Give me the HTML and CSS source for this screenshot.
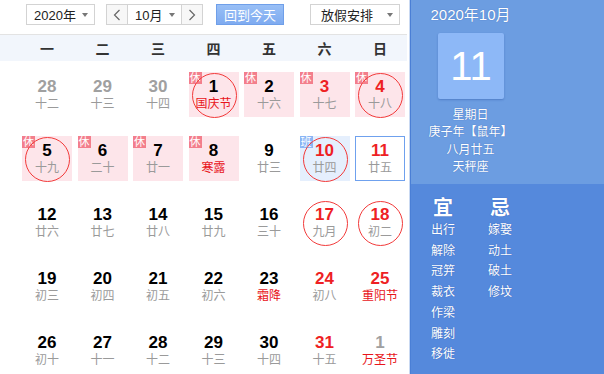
FILE: index.html
```html
<!DOCTYPE html>
<html lang="zh-CN">
<head>
    <meta charset="UTF-8">
    <title>万年历</title>
    <link rel="stylesheet" href="styles.css">
</head>
<body>
    <div class="calendar">
        <div class="main">
            <!-- 工具栏 -->
            <div class="toolbar">
                <div class="select year-select"><span>2020年</span><i class="caret"></i></div>
                <div class="month-group">
                    <span class="step"><svg width="8" height="12" viewBox="0 0 8 12"><path d="M6.5 1 L1.5 6 L6.5 11" fill="none" stroke="#666" stroke-width="1.2"/></svg></span>
                    <div class="select month-select"><span>10月</span><i class="caret"></i></div>
                    <span class="step"><svg width="8" height="12" viewBox="0 0 8 12"><path d="M1.5 1 L6.5 6 L1.5 11" fill="none" stroke="#666" stroke-width="1.2"/></svg></span>
                </div>
                <button class="today-btn">回到今天</button>
                <div class="select holiday-select"><span>放假安排</span><i class="caret"></i></div>
            </div>

            <!-- 星期 -->
            <div class="weekdays">
                <span>一</span><span>二</span><span>三</span><span>四</span><span>五</span><span>六</span><span>日</span>
            </div>

            <!-- 日期 -->
            <div class="days" id="days"></div>
        </div>

        <!-- 右侧面板 -->
        <div class="panel">
            <div class="panel-top">
                <div class="panel-title">2020年10月</div>
                <div class="big-day">11</div>
                <div class="panel-info">
                    <p>星期日</p>
                    <p>庚子年【鼠年】</p>
                    <p>八月廿五</p>
                    <p>天秤座</p>
                </div>
            </div>
            <div class="panel-bottom">
                <div class="yiji">
                    <h3>宜</h3>
                    <p>出行</p><p>解除</p><p>冠笄</p><p>裁衣</p><p>作梁</p><p>雕刻</p><p>移徙</p>
                </div>
                <div class="yiji">
                    <h3>忌</h3>
                    <p>嫁娶</p><p>动土</p><p>破土</p><p>修坟</p>
                </div>
            </div>
        </div>
    </div>

    <script>
        // 日期数据: 数字, 农历/节日, 样式
        const days = [
            [28, '十二', 'other'], [29, '十三', 'other'], [30, '十四', 'other'],
            [1, '国庆节', 'rest fest circle'], [2, '十六', 'rest'], [3, '十七', 'rest red'], [4, '十八', 'rest red circle'],
            [5, '十九', 'rest circle'], [6, '二十', 'rest'], [7, '廿一', 'rest'], [8, '寒露', 'rest fest'],
            [9, '廿三', ''], [10, '廿四', 'work red circle'], [11, '廿五', 'today red'],
            [12, '廿六', ''], [13, '廿七', ''], [14, '廿八', ''], [15, '廿九', ''], [16, '三十', ''],
            [17, '九月', 'red circle'], [18, '初二', 'red circle'],
            [19, '初三', ''], [20, '初四', ''], [21, '初五', ''], [22, '初六', ''], [23, '霜降', 'fest'],
            [24, '初八', 'red'], [25, '重阳节', 'red fest'],
            [26, '初十', ''], [27, '十一', ''], [28, '十二', ''], [29, '十三', ''], [30, '十四', ''],
            [31, '十五', 'red'], [1, '万圣节', 'other fest']
        ];

        const box = document.getElementById('days');
        days.forEach(([num, lunar, cls]) => {
            const cell = document.createElement('div');
            cell.className = 'day ' + cls;
            let html = '';
            if (cls.includes('rest')) html += '<span class="badge">休</span>';
            if (cls.includes('work')) html += '<span class="badge work">班</span>';
            html += `<div class="num">${num}</div><div class="lunar">${lunar}</div>`;
            if (cls.includes('circle')) html += '<span class="ring"></span>';
            cell.innerHTML = html;
            box.appendChild(cell);
        });
    </script>
</body>
</html>
```

FILE: styles.css
```css
* {
    margin: 0;
    padding: 0;
    box-sizing: border-box;
}

body {
    font-family: "Liberation Sans", "Noto Sans CJK SC", sans-serif;
    background-color: #fff;
    width: 604px;
    height: 374px;
    overflow: hidden;
}

.calendar {
    display: flex;
    height: 374px;
}

.main {
    width: 410px;
    border-right: 1px solid #c9d9f2;
    padding-right: 2px;
}

/* 工具栏 */
.toolbar {
    height: 35px;
    border-bottom: 1px solid #e3e3e3;
    display: flex;
    align-items: flex-start;
    padding: 4px 0 0 26px;
}

.select {
    height: 21px;
    border: 1px solid #d3d3d3;
    background-color: #fff;
    display: flex;
    align-items: center;
    justify-content: space-between;
    padding: 0 6px 0 7px;
    font-size: 13px;
    color: #222;
}

.caret {
    width: 0;
    height: 0;
    border-left: 3.5px solid transparent;
    border-right: 3.5px solid transparent;
    border-top: 4px solid #777;
}

.year-select {
    width: 69px;
}

.month-group {
    display: flex;
    height: 21px;
    margin-left: 11px;
    border: 1px solid #d3d3d3;
}

.month-group .select {
    height: 19px;
    border: none;
    border-left: 1px solid #d3d3d3;
    border-right: 1px solid #d3d3d3;
    width: 55px;
}

.step {
    width: 20px;
    display: flex;
    align-items: center;
    justify-content: center;
    background-color: #f7f7f7;
}

.today-btn {
    margin-left: 13px;
    width: 68px;
    height: 21px;
    border: 1px solid #6f9fe9;
    background: linear-gradient(#98bff6, #7fabf0);
    color: #fff;
    font-size: 13px;
    font-family: inherit;
}

.holiday-select {
    margin-left: 26px;
    width: 90px;
    padding-left: 10px;
}

/* 星期 */
.weekdays {
    height: 26px;
    background-color: #f2f6fc;
    display: grid;
    grid-template-columns: repeat(7, 50px);
    column-gap: 5.5px;
    padding-left: 22px;
    align-items: center;
    text-align: center;
    font-size: 14px;
    font-weight: bold;
    color: #333;
}

/* 日期 */
.days {
    display: grid;
    grid-template-columns: repeat(7, 50px);
    grid-auto-rows: 45px;
    column-gap: 5.5px;
    row-gap: 19px;
    padding: 11px 0 0 22px;
}

.day {
    position: relative;
    text-align: center;
    padding-top: 5px;
}

.num {
    font-size: 17px;
    font-weight: bold;
    line-height: 20px;
    color: #000;
}

.lunar {
    font-size: 12px;
    line-height: 14px;
    color: #9a9a9a;
}

.day.red .num {
    color: #ee1f24;
}

.day.other .num {
    color: #a0a0a0;
}

.day.fest .lunar {
    color: #e8151b;
}

.day.rest {
    background-color: #fde5ea;
}

.day.work {
    background-color: #e5effd;
}

.day.today {
    border: 1px solid #6fa1ee;
    padding-top: 4px;
}

.badge {
    position: absolute;
    top: 0;
    left: 0;
    width: 13px;
    height: 12px;
    background-color: #f37e8c;
    color: #fff;
    font-size: 11px;
    line-height: 12px;
    text-align: center;
}

.badge.work {
    background-color: #8ab5f5;
}

.ring {
    position: absolute;
    left: 3px;
    top: 1px;
    width: 45px;
    height: 45px;
    border: 1px solid #f23a3a;
    border-radius: 50%;
}

/* 右侧面板 */
.panel {
    width: 194px;
    border-left: 1px solid #4a7fd6;
    color: #fff;
    text-shadow: 0 0 1px rgba(20, 60, 150, 0.6);
}

.panel-top {
    height: 184px;
    background-color: #6c9de1;
    width: 100%;
}

.panel-title,
.panel-info {
    width: 119px;
    text-align: center;
}

.panel-title {
    font-size: 15px;
    line-height: 18px;
    padding-top: 6px;
}

.big-day {
    width: 66px;
    height: 66px;
    margin: 9px 0 0 27px;
    background-color: #8db8f7;
    border-radius: 2px;
    box-shadow: 0 1px 2px rgba(40, 80, 160, 0.4);
    font-size: 40px;
    line-height: 66px;
    text-align: center;
    text-shadow: none;
}

.panel-info {
    margin-top: 8px;
    font-size: 12px;
    line-height: 17.3px;
}

.panel-bottom {
    height: 190px;
    background-color: #5589dc;
    display: flex;
    gap: 33px;
    padding: 12px 0 0 20px;
}

.yiji {
    width: 24px;
    text-align: center;
}

.yiji h3 {
    font-size: 20px;
    line-height: 24px;
    font-weight: bold;
}

.yiji p {
    font-size: 12px;
    line-height: 20.7px;
}
```
